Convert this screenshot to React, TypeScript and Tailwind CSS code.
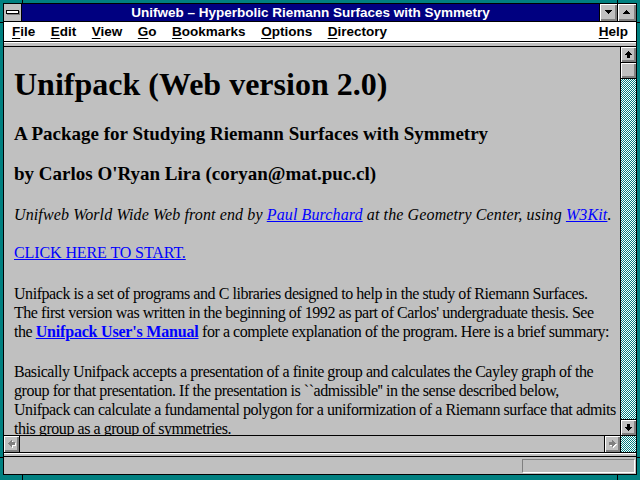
import React from 'react';

type Rect = number[];

const UP: Rect[] = [[3, 0, 1, 1], [2, 1, 3, 1], [1, 2, 5, 1], [0, 3, 7, 1], [2, 4, 3, 3]];
const DOWN: Rect[] = [[2, 0, 3, 3], [0, 3, 7, 1], [1, 4, 5, 1], [2, 5, 3, 1], [3, 6, 1, 1]];
const LEFT: Rect[] = [[0, 3, 1, 1], [1, 2, 1, 3], [2, 1, 1, 5], [3, 0, 1, 7], [4, 2, 3, 3]];
const RIGHT: Rect[] = [[0, 2, 3, 3], [3, 0, 1, 7], [4, 1, 1, 5], [5, 2, 1, 3], [6, 3, 1, 1]];
const TRI_DOWN: Rect[] = [[0, 0, 7, 1], [1, 1, 5, 1], [2, 2, 3, 1], [3, 3, 1, 1]];
const TRI_UP: Rect[] = [[3, 0, 1, 1], [2, 1, 3, 1], [1, 2, 5, 1], [0, 3, 7, 1]];

const Pixels = ({ rects, w = 7, h = 7, disabled = false }: { rects: Rect[]; w?: number; h?: number; disabled?: boolean }) => (
  <svg width={w + 1} height={h + 1} viewBox={`0 0 ${w + 1} ${h + 1}`} shapeRendering="crispEdges">
    {disabled &&
      rects.map(([x, y, rw, rh], i) => <rect key={'s' + i} x={x + 1} y={y + 1} width={rw} height={rh} fill="#ffffff" />)}
    {rects.map(([x, y, rw, rh], i) => (
      <rect key={i} x={x} y={y} width={rw} height={rh} fill={disabled ? '#808080' : '#000000'} />
    ))}
  </svg>
);

const bevel = 'bg-[#c0c0c0] shadow-[inset_1px_1px_0_#ffffff,inset_-1px_-1px_0_#808080,inset_-2px_-2px_0_#808080]';
const checker = 'bg-[repeating-conic-gradient(#008080_0_25%,#ffffff_0_50%)] bg-[length:2px_2px]';

const menus = [
  ['F', 'ile'],
  ['E', 'dit'],
  ['V', 'iew'],
  ['G', 'o'],
  ['B', 'ookmarks'],
  ['O', 'ptions'],
  ['D', 'irectory'],
];

const link = 'text-[#0000ff] underline';

export default function App() {
  return (
    <div className="relative w-[640px] h-[480px] overflow-hidden bg-[#008080] pt-[3px] pl-[3px] pr-[3px] pb-[5px]">
      {/* frame grips */}
      <div className="absolute left-[22px] top-0 w-px h-[3px] bg-black" />
      <div className="absolute left-[617px] top-0 w-px h-[3px] bg-black" />
      <div className="absolute left-[22px] bottom-0 w-px h-[5px] bg-black" />
      <div className="absolute left-[617px] bottom-0 w-px h-[5px] bg-black" />
      <div className="absolute left-0 top-[22px] w-[3px] h-px bg-black" />
      <div className="absolute right-0 top-[22px] w-[3px] h-px bg-black" />
      <div className="absolute left-0 top-[457px] w-[3px] h-px bg-black" />
      <div className="absolute right-0 top-[457px] w-[3px] h-px bg-black" />

      <div className="w-full h-full border border-black flex flex-col bg-[#c0c0c0] font-['Liberation_Sans',Arial,sans-serif]">
        {/* title bar */}
        <div className="h-[18px] flex border-b border-black shrink-0">
          <div className="w-[18px] border-r border-black bg-[#c0c0c0] flex items-center justify-center">
            <div className="w-[13px] h-[4px] bg-white border border-black shadow-[1px_1px_0_#808080] mt-[-1px] ml-[-1px]" />
          </div>
          <div className="flex-1 bg-[#000080] text-white font-bold text-[13.5px] leading-[17px] text-center whitespace-nowrap">
            Unifweb – Hyperbolic Riemann Surfaces with Symmetry
          </div>
          <div className={`w-[18px] border-l border-black flex items-center justify-center ${bevel}`}>
            <Pixels rects={TRI_DOWN} h={4} />
          </div>
          <div className={`w-[19px] border-l border-black flex items-center justify-center ${bevel}`}>
            <Pixels rects={TRI_UP} h={4} />
          </div>
        </div>

        {/* menu bar */}
        <div className="h-[19px] bg-white flex items-center text-[13.5px] font-bold text-black shrink-0 pl-[8px] pr-[8px]">
          {menus.map(([k, rest]) => (
            <span key={k} className="mr-[15.5px] leading-[17px]">
              <span className="underline underline-offset-2">{k}</span>
              {rest}
            </span>
          ))}
          <span className="ml-auto leading-[17px]">
            <span className="underline underline-offset-2">H</span>elp
          </span>
        </div>

        {/* separator */}
        <div className="h-[6px] shrink-0 bg-[#c0c0c0] border-t border-[#808080] border-b border-black shadow-[inset_0_1px_0_#ffffff]" />

        {/* main */}
        <div className="flex h-[388px] shrink-0">
          <div className="flex-1 overflow-hidden pl-[10px] pt-[21px] text-black font-['Liberation_Serif','Times_New_Roman',serif] whitespace-nowrap">
            <h1 className="text-[32px] leading-[32px] font-bold">Unifpack (Web version 2.0)</h1>
            <h3 className="mt-[23px] text-[19px] leading-[22px] font-bold">
              A Package for Studying Riemann Surfaces with Symmetry
            </h3>
            <h3 className="mt-[18px] text-[19px] leading-[22px] font-bold">
              by Carlos O'Ryan Lira (coryan@mat.puc.cl)
            </h3>
            <p className="mt-[20px] text-[16px] leading-[19px] italic tracking-[0.12px]">
              Unifweb World Wide Web front end by <span className={link}>Paul Burchard</span> at the Geometry
              Center, using <span className={link}>W3Kit</span>.
            </p>
            <p className="mt-[19px] text-[16px] leading-[19px] tracking-[-0.1px]">
              <span className={link}>CLICK HERE TO START.</span>
            </p>
            <p className="mt-[22px] text-[16px] leading-[19px] tracking-[-0.45px]">
              Unifpack is a set of programs and C libraries designed to help in the study of Riemann Surfaces.
              <br />
              The first version was written in the beginning of 1992 as part of Carlos' undergraduate thesis. See
              <br />
              the <span className={`${link} font-bold tracking-[-0.2px]`}>Unifpack User's Manual</span> for a
              complete explanation of the program. Here is a brief summary:
            </p>
            <p className="mt-[21px] text-[16px] leading-[19px] tracking-[-0.45px]">
              Basically Unifpack accepts a presentation of a finite group and calculates the Cayley graph of the
              <br />
              group for that presentation. If the presentation is ``admissible'' in the sense described below,
              <br />
              Unifpack can calculate a fundamental polygon for a uniformization of a Riemann surface that admits
              <br />
              this group as a group of symmetries.
            </p>
          </div>

          {/* vertical scrollbar */}
          <div className="w-[16px] border-l border-black flex flex-col">
            <div className={`h-[16px] border-b border-black flex items-center justify-center ${bevel}`}>
              <Pixels rects={UP} />
            </div>
            <div className={`h-[16px] border-b border-black ${bevel}`} />
            <div className={`flex-1 ${checker}`} />
            <div className={`h-[16px] border-t border-black flex items-center justify-center ${bevel}`}>
              <Pixels rects={DOWN} />
            </div>
          </div>
        </div>

        {/* horizontal scrollbar */}
        <div className="h-[17px] shrink-0 border-t border-black flex">
          <div className={`w-[16px] border-r border-black flex items-center justify-center ${bevel}`}>
            <Pixels rects={LEFT} disabled />
          </div>
          <div className="flex-1 bg-[#c0c0c0]" />
          <div className={`w-[16px] border-l border-black flex items-center justify-center ${bevel}`}>
            <Pixels rects={RIGHT} disabled />
          </div>
          <div className={`w-[16px] border-l border-black ${checker}`} />
        </div>

        {/* separator */}
        <div className="h-[5px] shrink-0 border-t border-black border-b bg-[#c0c0c0] shadow-[inset_0_1px_0_#ffffff]" />

        {/* status bar */}
        <div className="flex-1 flex justify-end items-start bg-[#c0c0c0]">
          <div className="w-[113px] h-[14px] mt-[2px] mr-[1px] border-t border-l border-[#808080] border-b border-r border-b-white border-r-white" />
        </div>
      </div>
    </div>
  );
}
